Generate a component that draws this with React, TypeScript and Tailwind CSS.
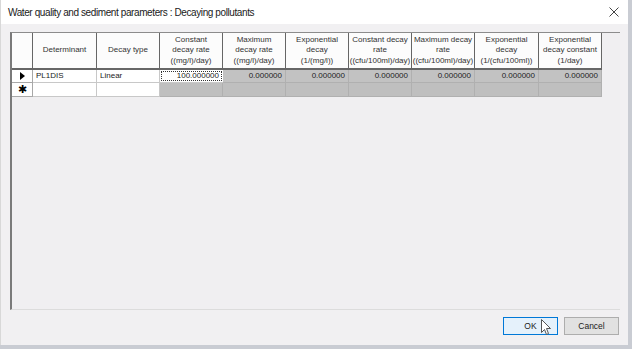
import React from "react";

const cols = [
  { w: 64, lines: ["Determinant"] },
  { w: 63, lines: ["Decay type"] },
  { w: 63, lines: ["Constant", "decay rate", "((mg/l)/day)"] },
  { w: 63, lines: ["Maximum", "decay rate", "((mg/l)/day)"] },
  { w: 63, lines: ["Exponential", "decay", "(1/(mg/l))"] },
  { w: 63, lines: ["Constant decay", "rate", "((cfu/100ml)/day)"] },
  { w: 63, lines: ["Maximum decay", "rate", "((cfu/100ml)/day)"] },
  { w: 64, lines: ["Exponential", "decay", "(1/(cfu/100ml))"] },
  { w: 63, lines: ["Exponential", "decay constant", "(1/day)"] },
];

const font = { fontFamily: '"Liberation Sans", Arial, sans-serif' };

export default function App() {
  return (
    <div className="relative w-[632px] h-[349px] overflow-hidden bg-[#c9ccd3]" style={font}>
      <div className="flex h-full">
        <div className="w-[628px] h-[345px] flex flex-col bg-[#f1f0f2] border-l border-[#d8d8d8]">
          {/* Title bar */}
          <div className="h-[24px] bg-white flex items-center justify-between pl-[7px] pr-[9px] shrink-0">
            <span className="text-[10px] text-[#1a1a1a] tracking-[-0.4px]">
              Water quality and sediment parameters : Decaying pollutants
            </span>
            <svg width="10" height="10" viewBox="0 0 10 10" className="text-[#444]">
              <path d="M0.5 0.5 L9.5 9.5 M9.5 0.5 L0.5 9.5" stroke="currentColor" strokeWidth="1" />
            </svg>
          </div>
          {/* Client */}
          <div className="flex-1 flex flex-col pt-[8px] pl-[9px] pr-[8px]">
            <div className="h-[278px] border-l-2 border-t border-b border-l-[#7a7a7a] border-t-[#8c8c8c] border-b-[#dcdcdc] bg-[#f0eff1] text-[8px] text-[#222]">
              {/* Header row */}
              <div className="flex h-[37px]">
                <div className="w-[21px] h-full bg-[#fcfcfc] border-r border-b-2 border-[#666]" />
                {cols.map((c, i) => (
                  <div
                    key={i}
                    className="h-full bg-[#fcfcfc] border-r border-b-2 border-[#666] flex flex-col items-center justify-center leading-[10.5px] text-[#333] whitespace-nowrap overflow-hidden"
                    style={{ width: c.w }}
                  >
                    {c.lines.map((l, j) => (
                      <span key={j}>{l}</span>
                    ))}
                  </div>
                ))}
              </div>
              {/* Row 1 */}
              <div className="flex h-[13px]">
                <div className="w-[21px] h-full bg-white border-r border-b border-[#a8a8a8] flex items-center justify-center">
                  <svg width="5" height="8" viewBox="0 0 5 8">
                    <path d="M0 0 L5 4 L0 8 Z" fill="#000" />
                  </svg>
                </div>
                <div className="w-[64px] h-full bg-white border-r border-b border-[#c8c8c8] flex items-center pl-[3px]">PL1DIS</div>
                <div className="w-[63px] h-full bg-white border-r border-b border-[#c8c8c8] flex items-center pl-[3px]">Linear</div>
                <div className="w-[63px] h-full bg-white border-b border-[#c8c8c8] p-[1px]">
                  <div className="h-full border border-dotted border-[#333] flex items-center justify-end pr-[2px]">100.000000</div>
                </div>
                {cols.slice(3).map((c, i) => (
                  <div
                    key={i}
                    className="h-full bg-[#c2c2c2] border-r border-b border-[#b0b0b0] flex items-center justify-end pr-[3px]"
                    style={{ width: c.w }}
                  >
                    0.000000
                  </div>
                ))}
              </div>
              {/* Row 2 */}
              <div className="flex h-[14px]">
                <div className="w-[21px] h-full bg-white border-r border-b border-[#a8a8a8] flex items-center justify-center">
                  <span className="text-[11px] leading-none text-black">✱</span>
                </div>
                <div className="w-[64px] h-full bg-white border-r border-b border-[#c8c8c8]" />
                <div className="w-[63px] h-full bg-white border-r border-b border-[#c8c8c8]" />
                {cols.slice(2).map((c, i) => (
                  <div
                    key={i}
                    className="h-full bg-[#bfbfbf] border-r border-b border-[#b0b0b0]"
                    style={{ width: c.w }}
                  />
                ))}
              </div>
            </div>
            {/* Buttons */}
            <div className="flex justify-end gap-[6px] mt-[7px] pr-[1px]">
              <button className="w-[55px] h-[18px] bg-[#e5f1fb] border border-[#0078d7] text-[8.5px] text-[#222] flex items-center justify-center">
                OK
              </button>
              <button className="w-[55px] h-[18px] bg-[#e1e1e1] border border-[#adadad] text-[8.5px] text-[#222] flex items-center justify-center">
                Cancel
              </button>
            </div>
          </div>
        </div>
      </div>
      {/* mouse cursor */}
      <svg className="absolute left-[541px] top-[319px]" width="11" height="17" viewBox="0 0 11 17">
        <path d="M0.5 0.5 L0.5 13.5 L3.5 10.5 L5.5 15.5 L7.5 14.5 L5.5 9.5 L9.5 9.5 Z" fill="#fff" stroke="#555" strokeWidth="1" />
      </svg>
    </div>
  );
}
